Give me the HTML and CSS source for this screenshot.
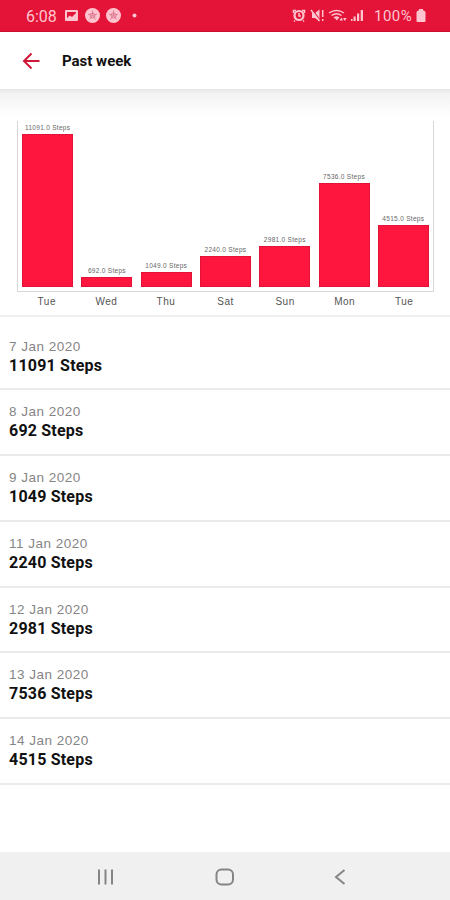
FILE: index.html
```html
<!DOCTYPE html>
<html lang="en">
<head>
    <meta charset="UTF-8">
    <meta name="viewport" content="width=device-width, initial-scale=1.0">
    <title>Past week</title>
    <link rel="stylesheet" href="styles.css">
</head>
<body>
    <div class="status-bar">
        <span class="clock">6:08</span>
        <svg class="status-left" width="80" height="18" viewBox="0 0 80 18">
            <path fill-rule="evenodd" d="M2 3h11a1 1 0 0 1 1 1v9a1 1 0 0 1-1 1H2a1 1 0 0 1-1-1V4a1 1 0 0 1 1-1zM3 5v6l3-2.500 2 1.500 4-4V5z"/>
            <circle cx="28.500" cy="8.500" r="7.500"/>
            <circle cx="49.500" cy="8.500" r="7.500"/>
            <g class="badge-lines">
                <path d="M28.500 3.500v5l4.500-1.500M28.500 8.500l3 4M28.500 8.500l-3 4M28.500 8.500L24 7"/>
                <path d="M49.500 3.500v5L54 7M49.500 8.500l3 4M49.500 8.500l-3 4M49.500 8.500L45 7"/>
                <circle cx="28.500" cy="8.500" r="2.500"/>
                <circle cx="49.500" cy="8.500" r="2.500"/>
            </g>
            <circle cx="70.500" cy="8.500" r="2"/>
        </svg>
        <svg class="status-right" width="74" height="18" viewBox="0 0 74 18">
            <!-- alarm -->
            <path class="line" d="M1.500 6V3.500H4M12.500 6V3.500H10M3 13.500l-1 1M11 13.500l1 1"/>
            <circle class="ring" cx="7" cy="8.500" r="4.500"/>
            <path class="line" d="M7 6v3h2"/>
            <!-- muted sound -->
            <path d="M20 6h3l4.500-3.500v12L23 11h-3z"/>
            <path class="slash" d="M20 2.500l8 11"/>
            <path class="line" d="M19 3l8.500 11"/>
            <path class="line" d="M30.700 3v7M30.700 12v2"/>
            <!-- wifi -->
            <path class="line" d="M37 6q7.500-5 15 0M39.500 8.500q5-3.500 10 0M42 11q2.500-2 5 0"/>
            <path d="M42.500 10.500H47l-2.200 3zM49.300 10.500l1.800 3h-3.600zM52.800 14L51 11h3.600z"/>
            <!-- signal -->
            <path d="M59 12h1.500v2H59zM61.500 9.500h2.200V14h-2.200zM65 6.500h2.200V14H65zM68.700 3h2.300v11h-2.300z"/>
        </svg>
        <span class="percent">100%</span>
        <svg class="battery" width="10" height="14" viewBox="0 0 10 14">
            <path d="M3 0h4v1.500h1L9.500 3v9a1 1 0 0 1-1 1h-7a1 1 0 0 1-1-1V3L2 1.500h1z"/>
        </svg>
    </div>

    <div class="header">
        <svg class="back" width="18" height="18" viewBox="0 0 18 18">
            <path d="M17.500 9H2M9.500 1.500L2 9l7.500 7.500"/>
        </svg>
        <h1 class="title">Past week</h1>
    </div>

    <div class="chart">
        <div class="plot">
            <div class="column"><span class="value">11091.0 Steps</span><div class="bar" style="height: 153px"></div></div>
            <div class="column"><span class="value">692.0 Steps</span><div class="bar" style="height: 10px"></div></div>
            <div class="column"><span class="value">1049.0 Steps</span><div class="bar" style="height: 15px"></div></div>
            <div class="column"><span class="value">2240.0 Steps</span><div class="bar" style="height: 31px"></div></div>
            <div class="column"><span class="value">2981.0 Steps</span><div class="bar" style="height: 41px"></div></div>
            <div class="column"><span class="value">7536.0 Steps</span><div class="bar" style="height: 104px"></div></div>
            <div class="column"><span class="value">4515.0 Steps</span><div class="bar" style="height: 62px"></div></div>
        </div>
        <div class="days">
            <span>Tue</span>
            <span>Wed</span>
            <span>Thu</span>
            <span>Sat</span>
            <span>Sun</span>
            <span>Mon</span>
            <span>Tue</span>
        </div>
    </div>

    <div class="list">
        <div class="item">
            <span class="date">7 Jan 2020</span>
            <span class="steps">11091 Steps</span>
        </div>
        <div class="item">
            <span class="date">8 Jan 2020</span>
            <span class="steps">692 Steps</span>
        </div>
        <div class="item">
            <span class="date">9 Jan 2020</span>
            <span class="steps">1049 Steps</span>
        </div>
        <div class="item">
            <span class="date">11 Jan 2020</span>
            <span class="steps">2240 Steps</span>
        </div>
        <div class="item">
            <span class="date">12 Jan 2020</span>
            <span class="steps">2981 Steps</span>
        </div>
        <div class="item">
            <span class="date">13 Jan 2020</span>
            <span class="steps">7536 Steps</span>
        </div>
        <div class="item">
            <span class="date">14 Jan 2020</span>
            <span class="steps">4515 Steps</span>
        </div>
    </div>

    <div class="nav-bar">
        <svg width="18" height="18" viewBox="0 0 18 18"><path d="M2 1.500v15M8.500 1.500v15M15 1.500v15"/></svg>
        <svg width="20" height="18" viewBox="0 0 20 18"><rect x="1.500" y="1.500" width="16.500" height="15" rx="5"/></svg>
        <svg width="12" height="18" viewBox="0 0 12 18"><path d="M10.500 2L2 9l8.500 7"/></svg>
    </div>
</body>
</html>
```
FILE: styles.css
```css
* {
    box-sizing: border-box;
}

body {
    margin: 0;
    height: 900px;
    display: flex;
    flex-direction: column;
    background-color: #fff;
    font-family: Roboto, sans-serif;
    color: #111;
    overflow: hidden;
}

.status-bar {
    height: 32px;
    flex-shrink: 0;
    display: flex;
    align-items: center;
    padding: 1px 24px 0 26px;
    background-color: #e31437;
    border-bottom: 1px solid #c9102f;
    color: #ffc4cf;
    font-size: 15px;
}

.status-bar svg {
    fill: #ffc4cf;
}

.clock {
    width: 38px;
    font-size: 16px;
}

.status-bar .badge-lines {
    fill: none;
    stroke: #d9758c;
    stroke-width: 0.9;
}

.status-right {
    margin-left: auto;
}

.line,
.ring {
    fill: none;
    stroke: #ffc4cf;
    stroke-width: 1.5;
}

.ring {
    stroke-width: 2.2;
}

.slash {
    stroke: #e31437;
    stroke-width: 1.5;
}

.percent {
    width: 42px;
    margin-left: 8px;
    letter-spacing: 0.5px;
}

.header {
    height: 57px;
    flex-shrink: 0;
    display: flex;
    align-items: center;
    padding-left: 22px;
    background-color: #fff;
}

.back {
    fill: none;
    stroke: #cf1738;
    stroke-width: 2;
}

.title {
    margin: 0 0 0 22px;
    font-size: 15px;
    font-weight: 700;
}

.chart {
    height: 228px;
    flex-shrink: 0;
    padding: 32px 16px 0 17px;
    background: linear-gradient(#e6e6e6, #f3f3f3 5px, #fff 28px);
    border-bottom: 2px solid #f0f0f0;
}

.plot {
    height: 171px;
    display: flex;
    padding-bottom: 4px;
    border: 1px solid #d8d8d8;
    border-top: none;
}

.column {
    flex: 1;
    display: flex;
    flex-direction: column;
    justify-content: flex-end;
    align-items: center;
}

.value {
    font-family: "Liberation Sans", sans-serif;
    font-size: 6.5px;
    line-height: 8px;
    margin-bottom: 2px;
    letter-spacing: 0.3px;
    white-space: nowrap;
    color: #666;
}

.bar {
    width: 51px;
    background-color: #ff163f;
    border: 1px solid #e31238;
}

.days {
    display: flex;
    padding-top: 3px;
    font-family: "Liberation Sans", sans-serif;
    font-size: 10px;
    line-height: 14px;
    letter-spacing: 0.5px;
    color: #555;
}

.days span {
    flex: 1;
    text-align: center;
}

.list {
    flex: 1;
    padding-top: 7.5px;
}

.item {
    height: 65.75px;
    display: flex;
    flex-direction: column;
    padding: 13px 9px 0;
    border-bottom: 2px solid #ebebeb;
}

.date {
    font-family: "Liberation Sans", sans-serif;
    font-size: 13.5px;
    line-height: 18px;
    letter-spacing: 0.5px;
    color: #858585;
}

.steps {
    font-size: 16px;
    line-height: 20px;
    font-weight: 700;
    letter-spacing: 0.2px;
}

.nav-bar {
    height: 48px;
    flex-shrink: 0;
    display: flex;
    align-items: center;
    justify-content: space-between;
    padding: 2px 104px 0 97px;
    background-color: #f0f0f0;
}

.nav-bar svg {
    fill: none;
    stroke: #858585;
    stroke-width: 2;
}
```
